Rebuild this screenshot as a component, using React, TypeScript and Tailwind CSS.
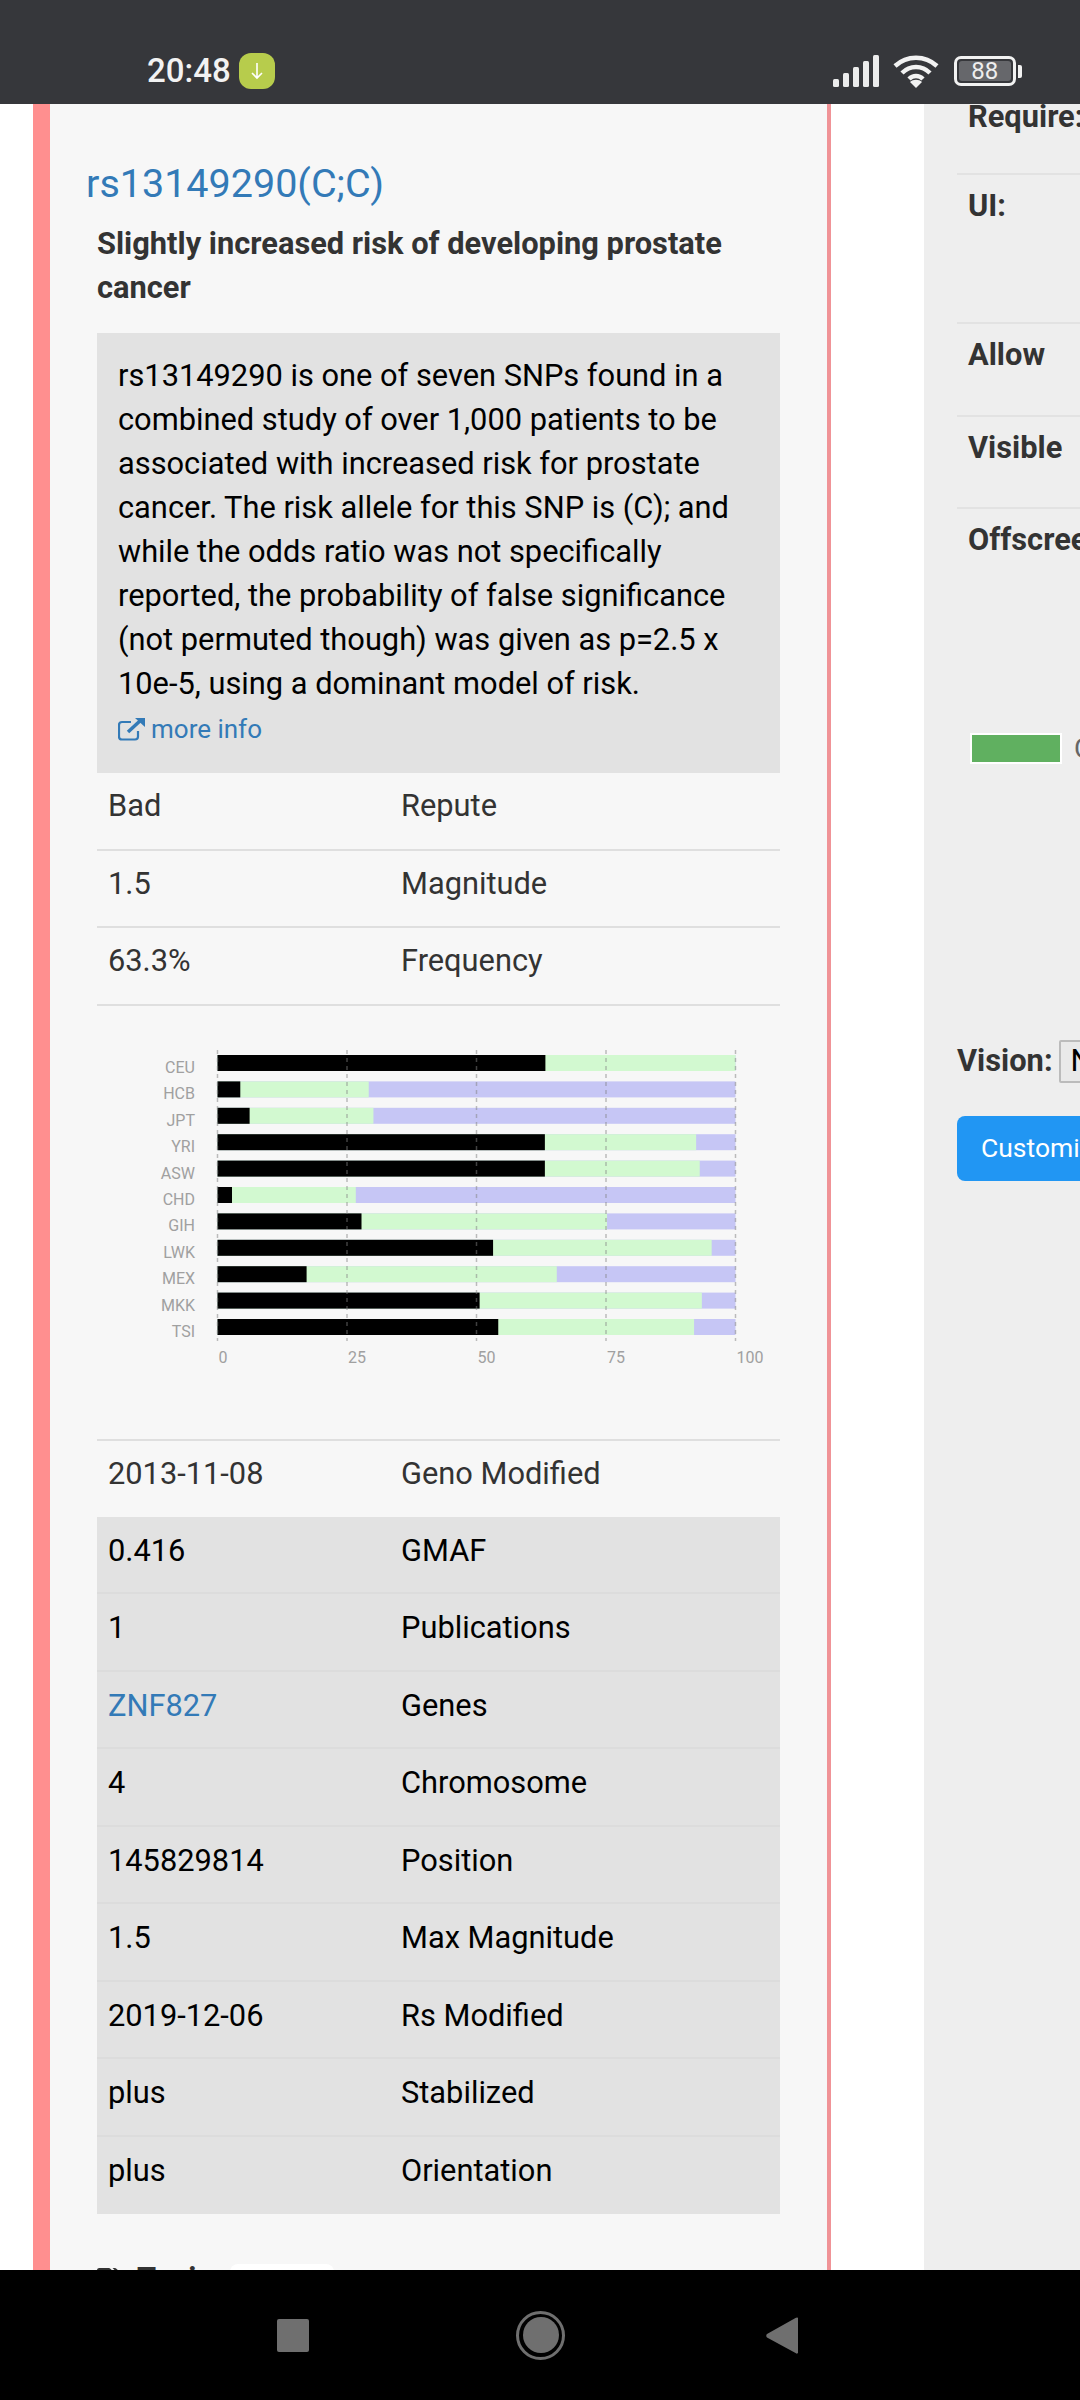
import { FaTags } from "react-icons/fa";

const font = { fontFamily: "Roboto, sans-serif" };

// [population, black end %, green end %]
const bars: [string, number, number][] = [
  ["CEU", 63.3, 100],
  ["HCB", 4.4, 29.2],
  ["JPT", 6.2, 30.1],
  ["YRI", 63.2, 92.4],
  ["ASW", 63.2, 93.1],
  ["CHD", 2.8, 26.7],
  ["GIH", 27.8, 75.2],
  ["LWK", 53.2, 95.4],
  ["MEX", 17.2, 65.5],
  ["MKK", 50.6, 93.5],
  ["TSI", 54.2, 92],
];

const lower: [React.ReactNode, string][] = [
  ["0.416", "GMAF"],
  ["1", "Publications"],
  [<a className="text-[#337ab7]">ZNF827</a>, "Genes"],
  ["4", "Chromosome"],
  ["145829814", "Position"],
  ["1.5", "Max Magnitude"],
  ["2019-12-06", "Rs Modified"],
  ["plus", "Stabilized"],
  ["plus", "Orientation"],
];

function Chart() {
  const x0 = 120.5;
  const w = 518;
  return (
    <svg width="683" height="433.5" viewBox="0 0 683 433.5" className="block">
      {bars.map(([name, black, green], i) => {
        const y = 49 + i * 26.4;
        return (
          <g key={name}>
            <rect x={x0} y={y} width={w} height="16" fill="#c6c6f5" />
            <rect x={x0} y={y} width={(w * green) / 100} height="16" fill="#d2f9d0" />
            <rect x={x0} y={y} width={(w * black) / 100} height="16" fill="#000" />
            <text x="98" y={y + 18} textAnchor="end" fontSize="16" fill="#a0a0a0" fontFamily="Roboto, sans-serif">
              {name}
            </text>
          </g>
        );
      })}
      {[0, 25, 50, 75, 100].map((t) => (
        <g key={t}>
          <line
            x1={x0 + (w * t) / 100}
            x2={x0 + (w * t) / 100}
            y1="44"
            y2="335"
            stroke="#808080"
            strokeOpacity="0.5"
            strokeWidth="1.5"
            strokeDasharray="4 4"
          />
          <text x={x0 + 1 + (w * t) / 100} y="357" fontSize="16" fill="#a0a0a0" fontFamily="Roboto, sans-serif">
            {t}
          </text>
        </g>
      ))}
    </svg>
  );
}

function Row({ a, b, className }: { a: React.ReactNode; b: string; className?: string }) {
  return (
    <div className={`flex items-center border-b-2 px-[11px] text-[30.8px] ${className}`}>
      <div className="w-[293px]">{a}</div>
      <div>{b}</div>
    </div>
  );
}

export default function App() {
  return (
    <div className="flex h-[2400px] w-[1080px] flex-col overflow-hidden bg-white" style={font}>
      {/* status bar */}
      <div className="flex h-[104px] flex-none items-center bg-[#36373b] pt-[38px] pl-[147px] text-[#f2f2f2]">
        <span className="text-[33px] font-medium">20:48</span>
        <span className="ml-[8px] flex h-[36px] w-[36px] items-center justify-center rounded-[12px] bg-[#b7cc4c]">
          <svg width="18" height="20" viewBox="0 0 18 20" fill="none" stroke="#fff" strokeWidth="1.6">
            <path d="M9 2v15M4 12l5 5 5-5" />
          </svg>
        </span>
        <svg width="47" height="32" viewBox="0 0 47 32" className="ml-[558px]" fill="#ececec">
          <rect x="0" y="24" width="6" height="8" rx="1.5" />
          <rect x="10" y="18" width="6" height="14" rx="1.5" />
          <rect x="20" y="12" width="6" height="20" rx="1.5" />
          <rect x="30" y="6" width="6" height="26" rx="1.5" />
          <rect x="40" y="0" width="6" height="32" rx="1.5" />
        </svg>
        <svg width="46" height="33" viewBox="0 0 46 33" className="ml-[13px]" fill="none" stroke="#f2f2f2" strokeWidth="4.5">
          <path d="M2 11C14 0 32 0 44 11" />
          <path d="M9 18C17 10 29 10 37 18" />
          <path d="M16 24C20 20 26 20 30 24" />
          <path d="M23 33l-6-6c3-3 9-3 12 0z" fill="#f2f2f2" stroke="none" />
        </svg>
        <div className="ml-[15px] flex h-[30px] w-[62px] items-center justify-center rounded-[7px] border-[3px] border-[#f2f2f2]">
          <span className="flex h-[20px] w-[52px] items-center justify-center rounded-[3px] bg-[#66676b] text-[24px] leading-none text-[#eee]">
            88
          </span>
        </div>
        <div className="ml-[2px] h-[13px] w-[4px] rounded-r-[2px] bg-[#f2f2f2]" />
      </div>

      {/* page */}
      <div className="flex min-h-0 flex-1 overflow-hidden">
        <div className="w-[33px] flex-none" />
        <div className="w-[798px] flex-none border-r-[4px] border-l-[17px] border-r-[#f09397] border-l-[#ff8f8f] bg-[#f7f7f7] pt-[60px]">
          <div className="pl-[36px] text-[39.5px] leading-[40px] text-[#337ab7]">rs13149290(C;C)</div>
          <div className="mt-[18px] ml-[47px] w-[683px]">
            <h4 className="text-[30.8px] leading-[44px] font-bold text-[#333]">
              Slightly increased risk of developing prostate cancer
            </h4>
            <div className="mt-[23px] h-[440px] bg-[#e2e2e2] px-[21px] pt-[21px] text-[30.8px] leading-[44px] text-black">
              rs13149290 is one of seven SNPs found in a combined study of over 1,000 patients to be associated with
              increased risk for prostate cancer. The risk allele for this SNP is (C); and while the odds ratio was not
              specifically reported, the probability of false significance (not permuted though) was given as p=2.5 x
              10e-5, using a dominant model of risk.
              <div className="mt-[1px] flex items-center text-[26px] text-[#337ab7]">
                <svg width="28" height="24" viewBox="0 0 28 24" fill="none" stroke="#337ab7" strokeWidth="2.2" className="mr-[5px]">
                  <path d="M20 14v5.5a3 3 0 0 1-3 3H4a3 3 0 0 1-3-3V8a3 3 0 0 1 3-3h9" />
                  <path d="M10 15L23 3" strokeWidth="3.5" />
                  <path d="M17 1h10v9z" fill="#337ab7" stroke="none" />
                </svg>
                more info
              </div>
            </div>
            <div className="text-[#333]">
              <Row a="Bad" b="Repute" className="h-[77.5px] border-[#dfdfdf] pb-[9px]" />
              <Row a="1.5" b="Magnitude" className="h-[77.5px] border-[#dfdfdf] pb-[9px]" />
              <Row a="63.3%" b="Frequency" className="h-[77.5px] border-[#dfdfdf] pb-[9px]" />
            </div>
            <Chart />
            <div className="border-t-2 border-[#dfdfdf] text-[#333]">
              <Row a="2013-11-08" b="Geno Modified" className="h-[75.5px] border-transparent pb-[7px]" />
            </div>
            <div className="bg-[#e2e2e2] text-black">
              {lower.map(([a, b]) => (
                <Row key={b} a={a} b={b} className="h-[77.5px] border-[#dcdcdc] pb-[7px] last:border-transparent" />
              ))}
            </div>
            <div className="mt-[50px] flex items-start text-[30.8px] leading-[36px] font-bold text-[#333]">
              <FaTags className="mt-[1px] mr-[10px] h-[30px] w-[30px]" />
              <span className="-mt-[3px]">Topic</span>
              <span className="ml-[18px] h-[44px] w-[104px] rounded-[8px] bg-white" />
            </div>
          </div>
        </div>
        <div className="w-[93px] flex-none" />

        {/* right panel, cut off by the viewport */}
        <div className="w-[156px] flex-none overflow-hidden bg-[#eee]">
          <div className="-mt-[5.5px] w-[400px] pl-[33px] text-[30.8px] leading-[36px] font-bold text-[#333]">
            <div className="h-[76px] border-b-2 border-[#e2e2e2] pl-[11px]">Require:</div>
            <div className="h-[149px] border-b-2 border-[#e2e2e2] pt-[13.5px] pl-[11px]">UI:</div>
            <div className="h-[93px] border-b-2 border-[#e2e2e2] pt-[13px] pl-[11px]">Allow</div>
            <div className="h-[92px] border-b-2 border-[#e2e2e2] pt-[13px] pl-[11px]">Visible</div>
            <div className="h-[222px] pt-[13px] pl-[11px]">Offscreen</div>
            <div className="flex items-center pl-[13px] font-normal text-[#666]">
              <span className="h-[31px] w-[92px] border-2 border-white bg-[#60b060]" />
              <span className="ml-[12px] text-[28px]">Off</span>
            </div>
            <div className="mt-[273px] flex items-center">
              Vision:
              <span className="ml-[6px] flex h-[43px] w-[120px] items-center rounded-[2px] border-2 border-[#bbb] bg-[#e9e9e9] pl-[10px] font-normal text-black">
                None
              </span>
            </div>
            <div className="mt-[33px] flex h-[65px] w-[300px] items-center rounded-[8px] bg-[#2196f3] pl-[24px] text-[26.5px] font-normal text-white">
              Customize
            </div>
          </div>
        </div>
      </div>

      {/* nav bar */}
      <div className="flex h-[130px] flex-none items-center bg-black">
        <div className="ml-[277px] h-[33px] w-[32px] rounded-[2px] bg-[#6f6f6f]" />
        <div className="ml-[207px] flex h-[49px] w-[49px] items-center justify-center rounded-full border-[3px] border-[#6f6f6f]">
          <div className="h-[36px] w-[36px] rounded-full bg-[#6f6f6f]" />
        </div>
        <svg width="32" height="37" viewBox="0 0 32 37" className="ml-[201px]" fill="#6f6f6f">
          <path d="M31 0.5c0.6 0 1 0.4 1 1V35.5c0 1-1.2 1.6-2 0.8L1 20.5c-1-1-1-2.6 0-3.6L29.5 1c0.4-0.3 1-0.5 1.5-0.5z" />
        </svg>
      </div>
    </div>
  );
}
